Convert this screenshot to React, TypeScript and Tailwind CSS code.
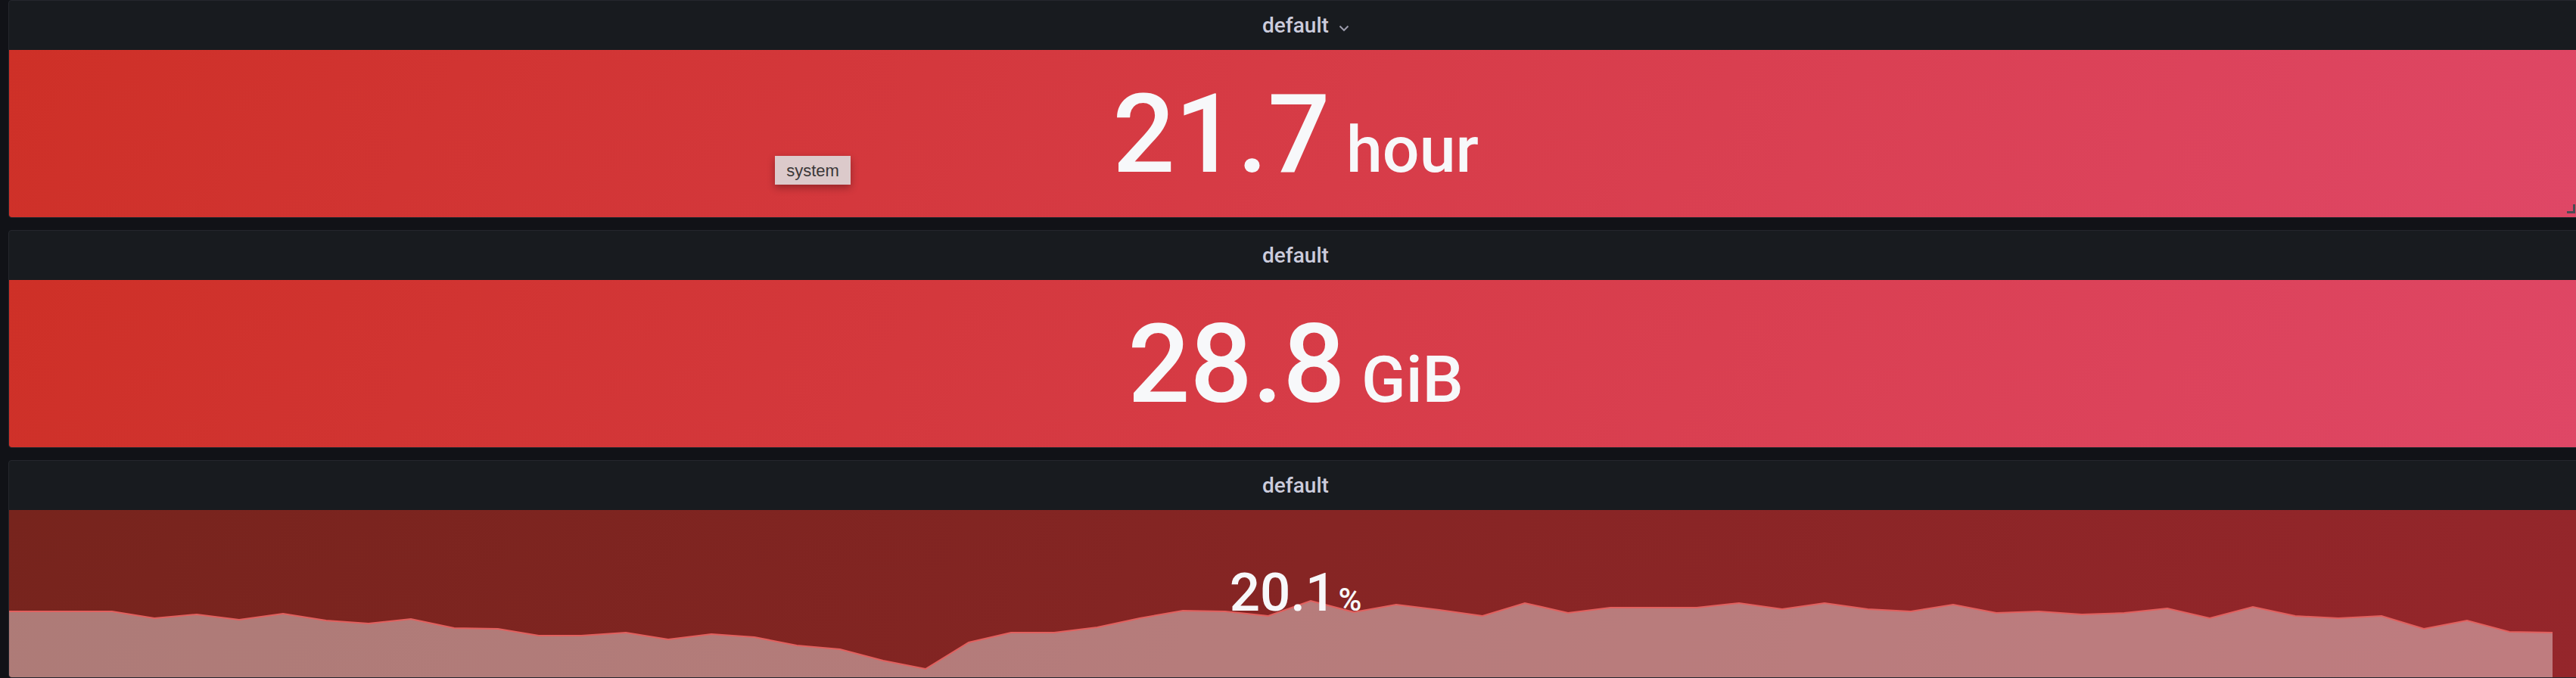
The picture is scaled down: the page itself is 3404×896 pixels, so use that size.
const SPARK: [number, number][] = [
  [12, 808], [35, 808], [91, 808], [148, 808], [204, 817], [260, 812], [316, 819], [374, 811],
  [431, 820], [487, 824], [543, 818], [600, 830], [658, 831], [712, 840], [768, 840],
  [827, 836], [883, 845], [940, 838], [997, 842], [1053, 853], [1110, 858], [1167, 873],
  [1223, 884], [1280, 849], [1336, 836], [1393, 836], [1450, 829], [1506, 817], [1563, 807],
  [1619, 808], [1676, 814], [1732, 794], [1789, 809], [1845, 799], [1902, 806], [1959, 814],
  [2015, 797], [2072, 810], [2128, 803], [2185, 803], [2242, 803], [2298, 797], [2355, 805],
  [2411, 797], [2468, 805], [2525, 808], [2581, 799], [2638, 810], [2694, 808], [2751, 812],
  [2807, 810], [2864, 804], [2920, 817], [2977, 802], [3033, 814], [3090, 817], [3147, 814],
  [3203, 831], [3260, 820], [3316, 835], [3373, 836],
];

// panel content starts at x=12, y=674 in page coordinates
const pts = SPARK.map(([x, y]) => [x - 12, y - 674] as [number, number]);
const line = pts.map(([x, y], i) => `${i === 0 ? "M" : "L"}${x},${y}`).join(" ");
const last = pts[pts.length - 1];
const area = `${line} L${last[0]},221 L0,221 Z`;

function PanelHeader({ menu }: { menu?: boolean }) {
  return (
    <div className="h-[65px] flex-none flex items-center justify-center">
      <span className="relative text-[28px] font-medium text-[#ccccdc] leading-none">
        default
        {menu && (
          <svg
            className="absolute left-full top-1/2 ml-[13px] -translate-y-[1px]"
            width="14"
            height="9"
            viewBox="0 0 14 9"
            fill="none"
          >
            <path d="M1.5 1.5 7 7l5.5-5.5" stroke="#9b9bab" strokeWidth="2" />
          </svg>
        )}
      </span>
    </div>
  );
}

function StatPanel({
  value,
  unit,
  menu,
}: {
  value: string;
  unit: string;
  menu?: boolean;
}) {
  return (
    <div className="relative w-[3402px] h-[288px] flex-none flex flex-col rounded-[4px] border border-[#25272d] bg-[#181b1f] overflow-hidden">
      <PanelHeader menu={menu} />
      <div className="flex-1 rounded-b-[3px] bg-[linear-gradient(120deg,#ce3027,#df4766)] flex items-center justify-center pt-[2px]">
        <div className="leading-none font-medium text-[#f7f8fa] whitespace-pre">
          <span className="text-[145px]">{value}</span>
          <span className="text-[86px]">{" " + unit}</span>
        </div>
      </div>
      {menu && (
        <svg className="absolute right-[9px] bottom-[5px]" width="11" height="12" viewBox="0 0 11 12">
          <path d="M0 10.5h9.5V0" stroke="#4b4d55" strokeWidth="3" fill="none" />
        </svg>
      )}
    </div>
  );
}

function SparkPanel() {
  return (
    <div className="relative w-[3402px] h-[288px] flex-none flex flex-col rounded-[4px] border border-[#25272d] bg-[#181b1f] overflow-hidden">
      <PanelHeader />
      <div className="relative flex-1 rounded-b-[3px] bg-[linear-gradient(120deg,#77241d,#95262b)] overflow-hidden">
        <svg className="absolute inset-0" width="3400" height="221" viewBox="0 0 3400 221">
          <path d={area} fill="rgba(255,255,255,0.4)" />
          <path d={line} fill="none" stroke="#e2605e" strokeWidth="2" />
        </svg>
        <div className="relative flex items-baseline justify-center pt-[73px] leading-none font-medium text-[#f7f8fa]">
          <span className="text-[71px]">20.1</span>
          <span className="text-[42px] ml-[3px]">%</span>
        </div>
      </div>
    </div>
  );
}

export default function App() {
  return (
    <div
      className="relative w-[3404px] h-[896px] overflow-hidden bg-[#111217] pl-[11px] flex flex-col gap-4"
      style={{ fontFamily: "Roboto, 'Noto Sans', sans-serif" }}
    >
      <StatPanel value="21.7" unit="hour" menu />
      <StatPanel value="28.8" unit="GiB" />
      <SparkPanel />

      <div
        className="absolute left-[1024px] top-[206px] w-[100px] h-[38px] flex items-center justify-center bg-[#dccacb] text-[#3b3838] text-[22px] shadow-[0_4px_10px_rgba(0,0,0,0.3)]"
        style={{ fontFamily: "'Liberation Sans', Arial, sans-serif" }}
      >
        system
      </div>
    </div>
  );
}
